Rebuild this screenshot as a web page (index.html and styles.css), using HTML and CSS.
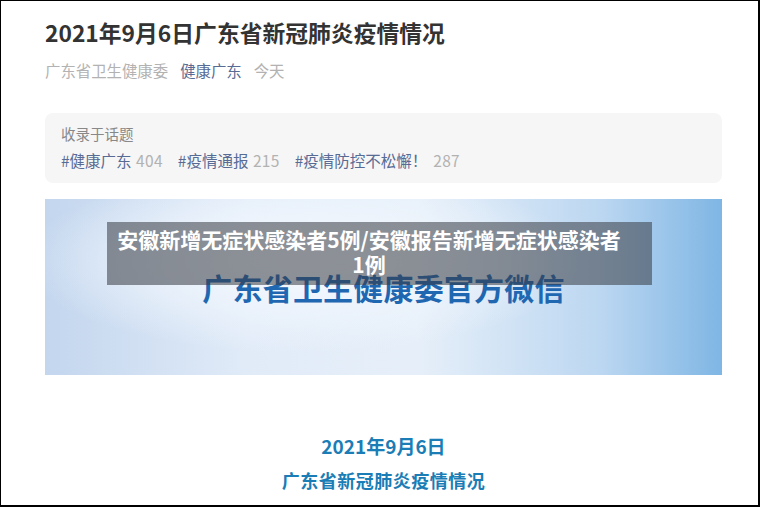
FILE: index.html
```html
<!DOCTYPE html>
<html lang="zh-CN">
<head>
<meta charset="utf-8">
<title>2021年9月6日广东省新冠肺炎疫情情况</title>
<link rel="stylesheet" href="styles.css">
</head>
<body>
<div class="frame">
  <div class="article">
    <h1 class="title">2021年9月6日广东省新冠肺炎疫情情况</h1>
    <div class="meta">
      <span class="meta-item">广东省卫生健康委</span>
      <span class="meta-item link">健康广东</span>
      <span class="meta-item">今天</span>
    </div>
    <div class="topics">
      <div class="topics-label">收录于话题</div>
      <div class="topics-list">
        <span class="topic"><span class="tag">#健康广东</span> <span class="count">404</span></span>
        <span class="topic"><span class="tag">#疫情通报</span> <span class="count">215</span></span>
        <span class="topic"><span class="tag">#疫情防控不松懈！</span><span class="count count-wide">287</span></span>
      </div>
    </div>
    <div class="banner">
      <div class="banner-text">广东省卫生健康委官方微信</div>
      <div class="overlay">安徽新增无症状感染者5例/安徽报告新增无症状感染者1例</div>
    </div>
    <div class="subhead">
      <p class="sub-line">2021年9月6日</p>
      <p class="sub-line">广东省新冠肺炎疫情情况</p>
    </div>
  </div>
</div>
</body>
</html>
```

FILE: styles.css
```css
html, body {
  margin: 0;
  padding: 0;
  background: #ffffff;
}

.frame {
  width: 760px;
  height: 507px;
  box-sizing: border-box;
  border-style: solid;
  border-color: #000;
  border-width: 1px 2px 2px 1px;
  overflow: hidden;
  font-family: "Noto Sans CJK SC", "Noto Sans", sans-serif;
}

.article {
  padding: 16px 36px 0 44px;
}

.title {
  margin: 0;
  font-size: 22.8px;
  line-height: 32px;
  font-weight: 700;
  color: #333333;
}

.meta {
  margin-top: 11px;
  display: flex;
  gap: 12px;
  font-size: 15.4px;
  line-height: 20px;
  color: #b2b2b2;
}

.meta-item.link {
  color: #576b95;
}

.topics {
  margin-top: 33px;
  background: #f6f6f6;
  border-radius: 8px;
  padding: 10px 16px 12px;
  display: flex;
  flex-direction: column;
  gap: 4px;
}

.topics-label {
  font-size: 14.5px;
  line-height: 22px;
  color: #888888;
}

.topics-list {
  display: flex;
  gap: 15px;
  font-size: 15.5px;
  line-height: 22px;
}

.tag {
  color: #576b95;
}

.count {
  color: #b2b2b2;
  margin-left: 1px;
  letter-spacing: 0.3px;
}

.count-wide {
  margin-left: 6px;
}

.banner {
  position: relative;
  margin-top: 16px;
  height: 176px;
  background:
    radial-gradient(ellipse 55% 70% at 38% 35%, rgba(248, 251, 255, 0.95) 0%, rgba(240, 246, 253, 0.6) 45%, rgba(240, 246, 253, 0) 75%),
    linear-gradient(90deg, #c3d6ee 0%, #e1ebf8 30%, #e6eff9 55%, #bcd7f1 82%, #7fb6e4 100%);
}

.banner-text {
  padding-top: 70px;
  text-align: center;
  font-size: 30px;
  line-height: 36px;
  font-weight: 700;
  color: #1f67b1;
  letter-spacing: 0.2px;
}

.overlay {
  position: absolute;
  left: 62px;
  top: 23px;
  width: 545px;
  height: 63px;
  box-sizing: border-box;
  padding: 5px 30px 0 9px;
  background: rgba(55, 58, 66, 0.55);
  color: #ffffff;
  font-size: 21px;
  line-height: 25px;
  font-weight: 700;
  text-align: center;
}

.subhead {
  margin-top: 54px;
  text-align: center;
  color: #1a7db5;
  font-weight: 700;
}

.sub-line {
  margin: 0;
  font-size: 19px;
  line-height: 34px;
}

.sub-line + .sub-line {
  font-size: 18px;
  letter-spacing: 0.5px;
}
```
